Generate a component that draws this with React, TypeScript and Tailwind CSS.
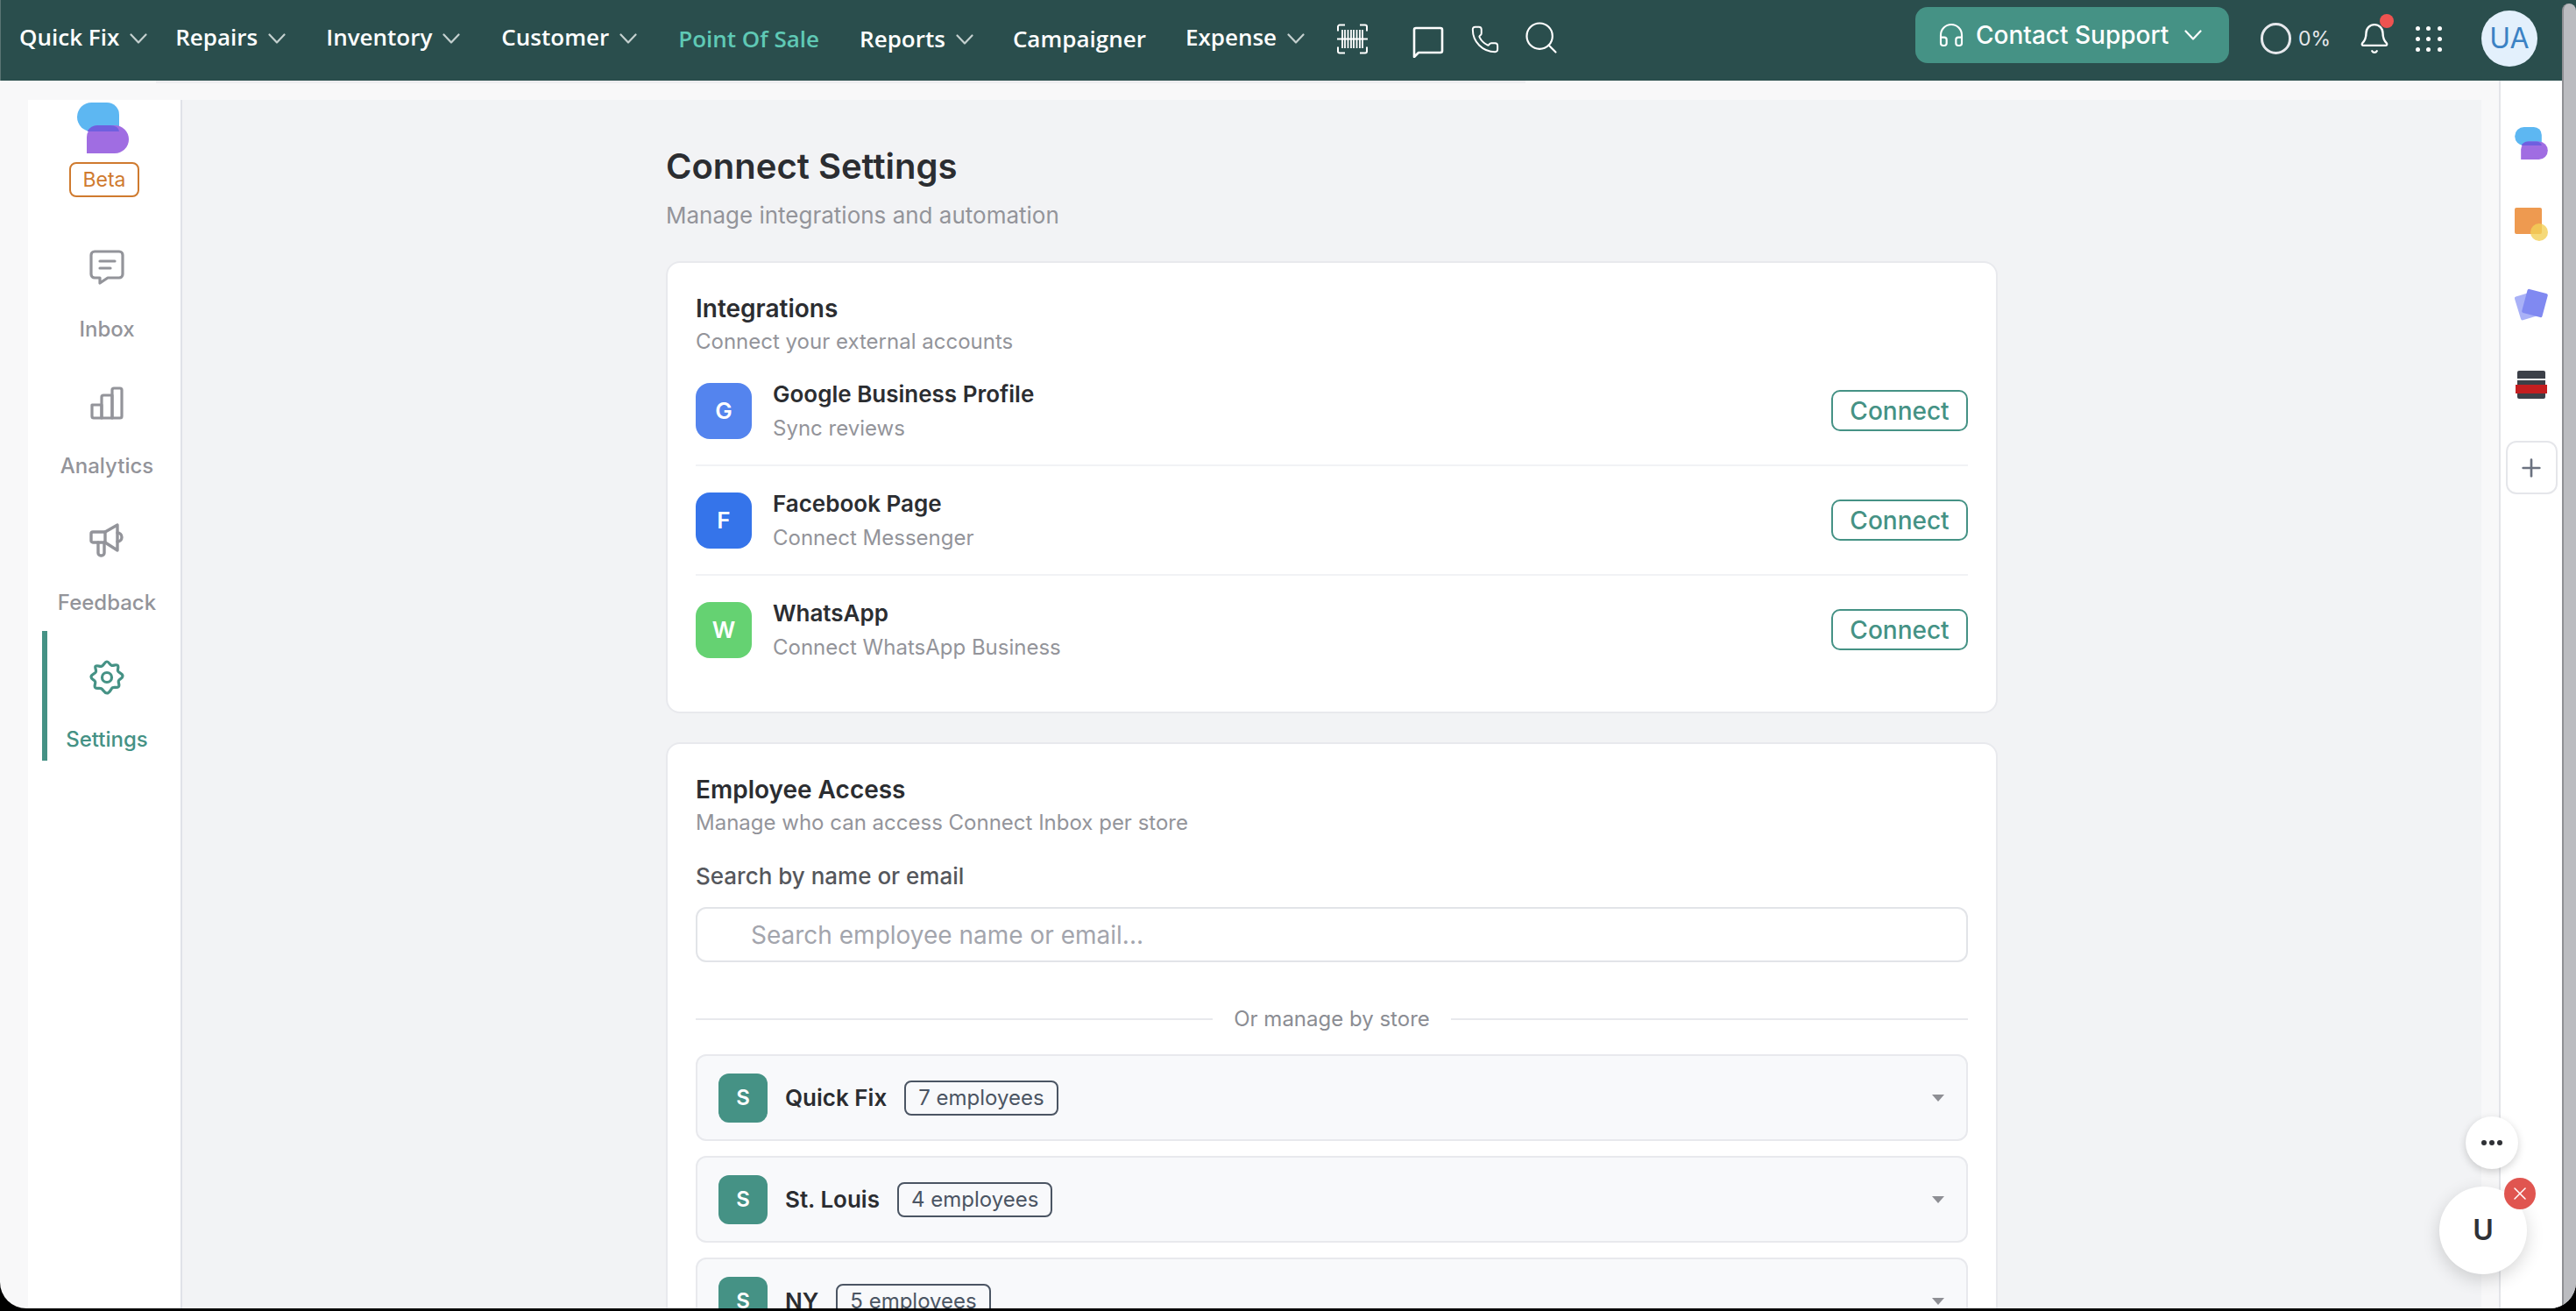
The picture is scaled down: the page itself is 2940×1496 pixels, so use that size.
import { Bell, Headphones, Phone, Plus, Search, X } from "lucide-react";

const navBefore = [
  { label: "Quick Fix", gap: "mr-[32px]" },
  { label: "Repairs", gap: "mr-[46px]" },
  { label: "Inventory", gap: "mr-[47px]" },
  { label: "Customer", gap: "mr-[47px]" },
];

const integrations = [
  { letter: "G", name: "Google Business Profile", sub: "Sync reviews", bg: "bg-[#5484ee]" },
  { letter: "F", name: "Facebook Page", sub: "Connect Messenger", bg: "bg-[#3574ea]" },
  { letter: "W", name: "WhatsApp", sub: "Connect WhatsApp Business", bg: "bg-[#65d272]" },
];

const stores = [
  { name: "Quick Fix", count: "7 employees" },
  { name: "St. Louis", count: "4 employees" },
  { name: "NY", count: "5 employees" },
];

function Caret({ className }: { className: string }) {
  return (
    <svg viewBox="0 0 20 12" className={className} fill="none" stroke="currentColor" strokeWidth="2.200" strokeLinecap="round" strokeLinejoin="round">
      <path d="M1.500 1.500 10 10.500l8.500-9" />
    </svg>
  );
}

function ConnectLogo({ className }: { className: string }) {
  return (
    <svg viewBox="0 0 59 58" className={className}>
      <path d="M16.500 0H34a14 14 0 0 1 14 14V33H16.500a16.500 16.500 0 0 1 0-33Z" fill="#5db7f2" />
      <path d="M25 26H43a16 16 0 0 1 0 32H11V40a14 14 0 0 1 14-14Z" fill="#a06de2" />
      <path d="M25 26H38a10 7 0 0 1 10 7H11.500A14 14 0 0 1 25 26Z" fill="#6f5fdf" />
    </svg>
  );
}

function InboxIcon() {
  return (
    <svg viewBox="0 0 40 40" className="h-10 w-10" fill="none" stroke="currentColor" strokeWidth="3.200" strokeLinecap="round" strokeLinejoin="round">
      <path d="M6 2h28a4 4 0 0 1 4 4v22a4 4 0 0 1-4 4H21l-9 6v-6H6a4 4 0 0 1-4-4V6a4 4 0 0 1 4-4Z" />
      <path d="M12 13h17M12 21h12" />
    </svg>
  );
}

function AnalyticsIcon() {
  return (
    <svg viewBox="0 0 40 40" className="h-10 w-10" fill="none" stroke="currentColor" strokeWidth="3.200" strokeLinejoin="round">
      <path d="M3 21h11v15H5a2 2 0 0 1-2-2V21Z" />
      <path d="M14 12a2 2 0 0 1 2-2h10v26H14V12Z" />
      <path d="M26 4a2 2 0 0 1 2-2h7a2 2 0 0 1 2 2v30a2 2 0 0 1-2 2h-9V4Z" />
    </svg>
  );
}

function FeedbackIcon() {
  return (
    <svg viewBox="0 0 40 40" className="h-10 w-10" fill="none" stroke="currentColor" strokeWidth="3.400" strokeLinecap="round" strokeLinejoin="round">
      <path d="M4 10h14v12H4a2 2 0 0 1-2-2v-8a2 2 0 0 1 2-2Z" />
      <path d="M18 10 32 2v29L18 22" />
      <path d="M32 11a5 5 0 0 1 0 10" />
      <path d="M10 22v12a3 3 0 0 0 3 3h1a3 3 0 0 0 3-3V22" />
    </svg>
  );
}

function GearIcon() {
  return (
    <svg viewBox="0 0 40 40" className="h-10 w-10" fill="none" stroke="currentColor" strokeWidth="3.200" strokeLinejoin="round">
      <path d="M20 2c2.400 0 3 3.600 5.200 4.300 2.200.7 5-1.600 7 0 1.800 1.500-.4 4.400.4 6.500.8 2.100 5.400 2.700 5.400 5.700 0 2.800-3.800 3-4.600 5.200-.8 2.200 1.500 4.800 0 6.800-1.500 1.900-4.800.3-7 1.200C24.300 33.700 23 38 20 38s-4.300-4.300-6.400-5.300c-2.200-.9-5.500.7-7-1.200-1.500-2 .8-4.600 0-6.800C5.800 22.500 2 22.300 2 19.500c0-3 4.600-3.600 5.400-5.700.8-2.100-1.400-5-.4-6.500 2-1.600 4.800.7 7 0C16.200 6.600 17.600 2 20 2Z" />
      <circle cx="20" cy="20" r="5.500" />
    </svg>
  );
}

const sideItems = [
  { label: "Inbox", icon: <InboxIcon /> },
  { label: "Analytics", icon: <AnalyticsIcon /> },
  { label: "Feedback", icon: <FeedbackIcon /> },
  { label: "Settings", icon: <GearIcon />, active: true },
];

function BarcodeIcon() {
  return (
    <svg viewBox="0 0 35 35" className="h-[35px] w-[35px] text-white" fill="none" stroke="currentColor">
      <path d="M9 1.500H3A2 2 0 0 0 1 3.500v5M26 1.500h6a2 2 0 0 1 2 2v5M9 33.500H3a2 2 0 0 1-2-2v-5M26 33.500h6a2 2 0 0 0 2-2v-5" strokeWidth="2" />
      <path d="M6 7v21M9 7v21M12.500 7v21M16 7v21M19 7v21M22.500 7v21M26 7v21M29 7v21" strokeWidth="1.800" />
      <path d="M0 17.500h35" strokeWidth="2" />
    </svg>
  );
}

function GridDots() {
  return (
    <div className="grid w-[30px] grid-cols-3 gap-x-[7px] gap-y-[7px]">
      {Array.from({ length: 9 }).map((_, i) => (
        <span key={i} className="h-[5px] w-[5px] rounded-full bg-white" />
      ))}
    </div>
  );
}

function TopBar() {
  return (
    <header className="relative flex h-[92px] shrink-0 items-center border-l border-[#5a7473] bg-[#2a4e4d] pl-[21px] font-['Open_Sans',sans-serif] text-[26px] font-semibold text-white">
      <div className="flex items-center pb-[8px]">
        {navBefore.map((item) => (
          <div key={item.label} className={`flex items-center ${item.gap}`}>
            <span>{item.label}</span>
            <Caret className="ml-3 mt-[3px] h-[12px] w-5 text-[#c4d0cf]" />
          </div>
        ))}
        <span className="mr-[46px] mt-[5px] text-[#5fc9b5]">Point Of Sale</span>
        <div className="mr-[45px] mt-[5px] flex items-center">
          <span>Reports</span>
          <Caret className="ml-3 h-[12px] w-5 text-[#c4d0cf]" />
        </div>
        <span className="mr-[45px] mt-[5px]">Campaigner</span>
        <div className="mr-[37px] flex items-center">
          <span>Expense</span>
          <Caret className="ml-3 mt-[3px] h-[12px] w-5 text-[#c4d0cf]" />
        </div>
        <div className="mt-[5px]">
          <BarcodeIcon />
        </div>
        <svg viewBox="0 0 36 36" className="ml-[51px] mt-[12px] h-[36px] w-[36px]" fill="none" stroke="white" strokeWidth="2.600" strokeLinejoin="round">
          <path d="M4 2h28a2 2 0 0 1 2 2v24a2 2 0 0 1-2 2H7l-5 5V4a2 2 0 0 1 2-2Z" />
        </svg>
        <Phone className="ml-[30px] mt-[6px] h-[34px] w-[34px] text-white" strokeWidth={1.4} />
        <Search className="ml-[25px] mt-[2px] h-[44px] w-[44px] text-white" strokeWidth={1.2} />
      </div>

      <button className="ml-auto mt-2 flex h-[64px] w-[358px] items-center self-start rounded-[14px] bg-[#459285] pl-[25px] font-['Inter',sans-serif] text-[28px] font-medium text-white">
        <Headphones className="h-[32px] w-[32px]" strokeWidth={1.6} />
        <span className="ml-[12px] whitespace-nowrap">Contact Support</span>
        <Caret className="ml-[18px] h-[12px] w-5" />
      </button>
      <div className="flex items-center pb-[4px]">
        <span className="ml-[36px] h-[36px] w-[35px] rounded-full border-[3px] border-[#e6e8ec]" />
        <span className="ml-[8px] w-[36px] whitespace-nowrap font-['Inter',sans-serif] text-[23px] font-normal text-[#e6e8ec]">0%</span>
        <div className="relative ml-[32px]">
          <Bell className="h-[38px] w-[38px] text-white" strokeWidth={1.5} />
          <span className="absolute -right-[3px] -top-[9px] h-4 w-4 rounded-full bg-[#ef5350]" />
        </div>
        <div className="ml-[28px]">
          <GridDots />
        </div>
        <div className="ml-[45px] mr-[44px] flex h-[64px] w-[64px] items-center justify-center rounded-full bg-[#e3f0fc] font-['Inter',sans-serif] text-[32px] font-normal text-[#3b82c4]">
          UA
        </div>
      </div>
    </header>
  );
}

function Sidebar() {
  return (
    <aside className="flex w-[176px] shrink-0 flex-col items-center border-r-2 border-[#e0e2e8] bg-white pt-[3px]">
      <ConnectLogo className="mr-[3px] h-[58px] w-[59px]" />
      <span className="mt-[10px] flex h-[40px] w-[80px] items-center justify-center rounded-[8px] border-2 border-[#cf7a2e] text-[23px] text-[#cf7a2e]">
        Beta
      </span>
      <nav className="mt-[27px] flex w-full flex-col gap-2 pl-4">
        {sideItems.map((item) => (
          <div key={item.label} className={`relative flex h-[148px] w-[148px] flex-col items-center pt-[33px] ${item.active ? "text-[#459285]" : "text-[#93949a]"}`}>
            {item.active && <span className="absolute inset-y-0 left-0 w-1.5 bg-[#459285]" />}
            {item.icon}
            <span className="mt-[35px] text-[24px] font-medium leading-[32px]">{item.label}</span>
          </div>
        ))}
      </nav>
    </aside>
  );
}

function Integrations() {
  return (
    <section className="rounded-2xl border-2 border-[#e8e9ed] bg-white px-[32px] pb-[30px] pt-[34px]">
      <h2 className="text-[28px] font-semibold leading-[36px] text-[#2b2d31]">Integrations</h2>
      <p className="mt-1 text-[24px] leading-[32px] text-[#93949a]">Connect your external accounts</p>
      <div className="mt-px">
        {integrations.map((row, i) => (
          <div key={row.name} className={`flex h-[125px] items-center border-b-2 ${i < 2 ? "border-[#f1f2f5]" : "border-transparent"}`}>
            <div className={`flex h-16 w-16 items-center justify-center rounded-[16px] text-[26px] font-semibold text-white ${row.bg}`}>
              {row.letter}
            </div>
            <div className="ml-6">
              <div className="text-[26px] font-semibold leading-[36px] text-[#2b2d31]">{row.name}</div>
              <div className="mt-[5px] text-[24px] leading-[32px] text-[#93949a]">{row.sub}</div>
            </div>
            <button className="ml-auto flex h-[47px] w-[156px] items-center justify-center rounded-[10px] border-2 border-[#459285] text-[28px] font-medium text-[#459285]">
              Connect
            </button>
          </div>
        ))}
      </div>
    </section>
  );
}

function EmployeeAccess() {
  return (
    <section className="mt-[33px] rounded-2xl border-2 border-[#e8e9ed] bg-white px-[32px] pb-[30px] pt-[34px]">
      <h2 className="text-[28px] font-semibold leading-[36px] text-[#2b2d31]">Employee Access</h2>
      <p className="mt-1 text-[24px] leading-[32px] text-[#93949a]">Manage who can access Connect Inbox per store</p>
      <div className="mt-[27px] text-[26px] font-medium leading-[36px] text-[#55575c]">Search by name or email</div>
      <input
        placeholder="Search employee name or email..."
        className="mt-[17px] block h-[63px] w-full rounded-[12px] border-2 border-[#e2e4e8] bg-white pl-[61px] text-[28px] outline-none placeholder:text-[#a3a5ad]"
      />
      <div className="mt-[49px] flex items-center gap-6">
        <span className="h-0.5 flex-1 bg-[#e8e9ed]" />
        <span className="text-[24px] leading-[32px] text-[#8b8d93]">Or manage by store</span>
        <span className="h-0.5 flex-1 bg-[#e8e9ed]" />
      </div>
      <div className="mt-6 flex flex-col gap-[17px]">
        {stores.map((store) => (
          <div key={store.name} className="flex h-[99px] items-center rounded-[12px] border-2 border-[#e8e9ed] bg-[#f8f9fb] pl-6 pr-[25px]">
            <div className="flex h-14 w-14 items-center justify-center rounded-[12px] bg-[#459285] text-[24px] font-semibold text-white">S</div>
            <span className="ml-5 text-[26px] font-semibold text-[#2b2d31]">{store.name}</span>
            <span className="ml-5 flex h-[40px] items-center rounded-[8px] border-2 border-[#4b5563] px-[14px] text-[24px] text-[#4b5563]">
              {store.count}
            </span>
            <span className="ml-auto h-0 w-0 border-x-[7.5px] border-t-[8px] border-x-transparent border-t-[#8e8f94]" />
          </div>
        ))}
      </div>
    </section>
  );
}

function RightRail() {
  return (
    <aside className="flex w-[72px] shrink-0 flex-col items-center border-l-2 border-[#e4e5e9] bg-white pt-[53px]">
      <ConnectLogo className="h-[37px] w-[38px]" />
      <svg viewBox="0 0 38 38" className="mt-[55px] h-[38px] w-[38px]">
        <rect x="0" y="0" width="31" height="30" rx="2" fill="#ee9a50" />
        <circle cx="28" cy="28" r="10" fill="#f3cf58" fillOpacity="0.8" />
      </svg>
      <svg viewBox="0 0 38 38" className="mt-[54px] h-[38px] w-[38px]">
        <rect x="3" y="6" width="24" height="28" rx="2" fill="#a9b1f7" transform="rotate(-17 15 20)" />
        <rect x="11" y="3" width="24" height="28" rx="2" fill="#8089f1" transform="rotate(15 23 17)" />
      </svg>
      <svg viewBox="0 0 36 32" className="mt-[56px] h-[32px] w-[36px]">
        <rect x="2" y="0" width="32" height="32" rx="2" fill="#3c4048" />
        <rect x="2" y="9" width="32" height="2" fill="#f4f4f5" />
        <rect x="0" y="16" width="36" height="10" fill="#c41e20" />
      </svg>
      <div className="mt-12 flex h-[61px] w-[59px] items-center justify-center rounded-[12px] border-2 border-[#e5e6ea] text-[#6b7280]">
        <Plus className="h-8 w-8" strokeWidth={2} />
      </div>
    </aside>
  );
}

export default function App() {
  return (
    <div className="relative h-screen overflow-hidden bg-black font-['Inter',sans-serif]">
      <div className="relative flex h-[1493px] flex-col overflow-hidden rounded-b-[30px] bg-[#f8f8f9]">
        <TopBar />
        <div className="flex min-h-0 flex-1 pr-4">
          <div className="flex min-w-0 flex-1 pl-[32px] pt-[22px]">
            <Sidebar />
            <main className="min-w-0 flex-1 bg-[#f2f3f5]">
              <div className="mx-auto w-[1520px] pt-[56px]">
                <h1 className="text-[40px] font-semibold leading-[40px] text-[#2b2d31]">Connect Settings</h1>
                <p className="mt-[20px] text-[26px] leading-[32px] text-[#93949a]">Manage integrations and automation</p>
                <div className="mt-[36px]">
                  <Integrations />
                  <EmployeeAccess />
                </div>
              </div>
            </main>
            <div className="w-[20px] shrink-0" />
          </div>
          <RightRail />
        </div>

        <div className="absolute bottom-0 right-0 top-1 w-4 rounded-t-lg border-l-2 border-[#8f9094] bg-[#bbbcc0]" />
        <div className="absolute left-[178px] top-[92px] h-[3px] w-[1563px] bg-[#eeeef0]" />
        <button className="absolute left-[2814px] top-[1274px] flex h-[60px] w-[60px] items-center justify-center gap-[3px] rounded-full bg-white shadow-[0_3px_10px_rgba(0,0,0,0.18)]">
          <span className="h-[6px] w-[6px] rounded-full bg-[#2f3136]" />
          <span className="h-[6px] w-[6px] rounded-full bg-[#2f3136]" />
          <span className="h-[6px] w-[6px] rounded-full bg-[#2f3136]" />
        </button>
        <div className="absolute left-[2784px] top-[1354px] flex h-[100px] w-[100px] items-center justify-center rounded-full bg-white text-[32px] font-semibold text-[#2f3136] shadow-[0_6px_20px_rgba(0,0,0,0.16)]">
          U
        </div>
        <div className="absolute left-[2858px] top-[1344px] flex h-9 w-9 items-center justify-center rounded-full bg-[#e05550] text-white">
          <X className="h-6 w-6" strokeWidth={1.5} />
        </div>
      </div>
    </div>
  );
}
